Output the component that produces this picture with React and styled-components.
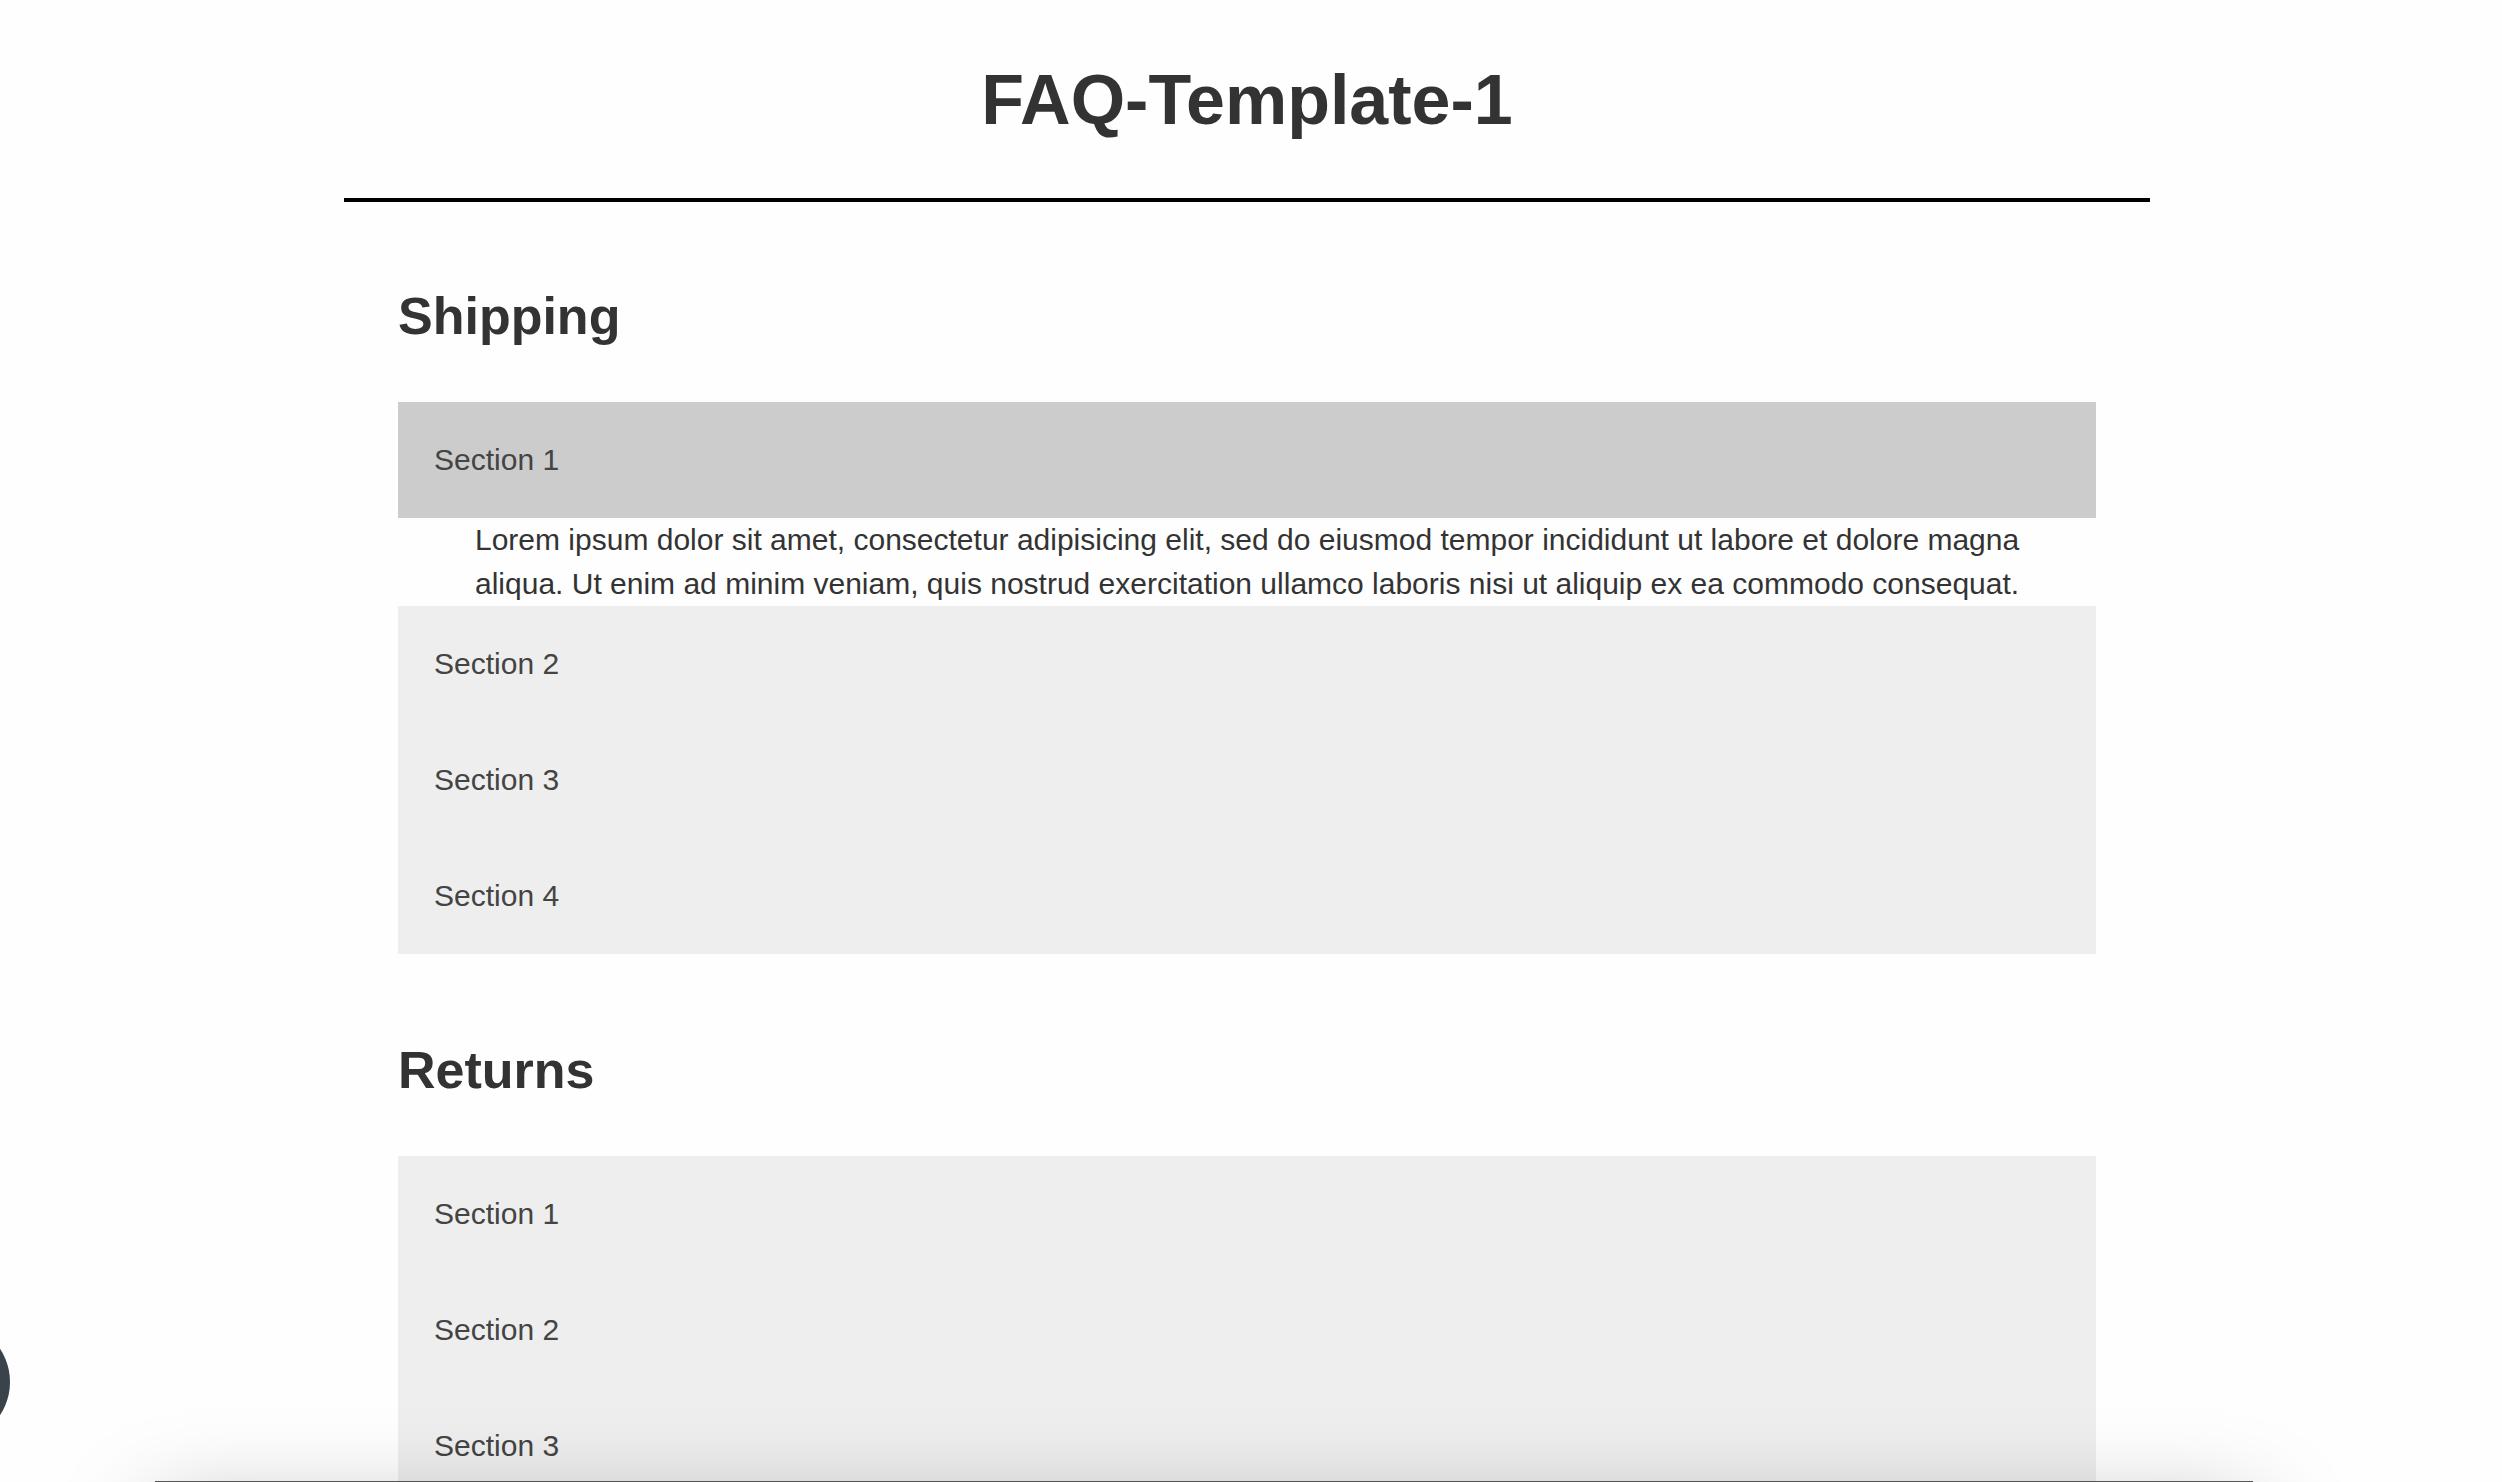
import React, { useState } from "react";
import styled, { createGlobalStyle } from "styled-components";

const GlobalStyle = createGlobalStyle`
  * { box-sizing: border-box; }
  body {
    margin: 0;
    background: #fefefe;
    color: #333;
    font-family: "Liberation Sans", Arial, Helvetica, sans-serif;
  }
`;

const Page = styled.div`
  height: 100vh;
  overflow: hidden;
  padding-right: 8px;
`;

const Main = styled.main`
  margin: 0 344px;
`;

const Header = styled.header`
  padding: 60px 0 58px;
  border-bottom: 4px solid #000;
  text-align: center;
`;

const Title = styled.h1`
  margin: 0;
  font-size: 70px;
  line-height: 80px;
`;

const Category = styled.section`
  padding: 82px 54px 2px;
`;

const CategoryTitle = styled.h2`
  margin: 0 0 54px;
  font-size: 52px;
  line-height: 64px;
`;

const Toggle = styled.button`
  display: block;
  width: 100%;
  padding: 36px;
  border: 0;
  background: ${({ $open }) => ($open ? "#ccc" : "#eee")};
  color: #444;
  font: inherit;
  font-size: 30px;
  line-height: 44px;
  text-align: left;
  cursor: pointer;

  &:hover {
    background: #ccc;
  }
`;

const Answer = styled.p`
  margin: 0;
  padding: 0 72px 0 77px;
  font-size: 30px;
  line-height: 44px;
`;

const ChatBubble = styled.button`
  position: fixed;
  left: -110px;
  bottom: 40px;
  width: 120px;
  height: 120px;
  padding: 0;
  border: 0;
  border-radius: 50%;
  background: #3a424c;
`;

const BottomSheet = styled.div`
  position: fixed;
  top: calc(100vh - 1px);
  left: 155px;
  right: 249px;
  height: 400px;
  background: #555;
  box-shadow: 0 36px 90px rgba(0, 0, 0, 0.34);
  pointer-events: none;
`;

const LOREM =
  "Lorem ipsum dolor sit amet, consectetur adipisicing elit, sed do eiusmod tempor incididunt ut labore et dolore magna aliqua. Ut enim ad minim veniam, quis nostrud exercitation ullamco laboris nisi ut aliquip ex ea commodo consequat.";

const CATEGORIES = [
  { title: "Shipping", items: ["Section 1", "Section 2", "Section 3", "Section 4"], initial: 0 },
  { title: "Returns", items: ["Section 1", "Section 2", "Section 3"], initial: -1 },
];

function Accordion({ title, items, initial }) {
  const [open, setOpen] = useState(initial);
  return (
    <Category>
      <CategoryTitle>{title}</CategoryTitle>
      {items.map((item, i) => (
        <React.Fragment key={item}>
          <Toggle
            type="button"
            $open={open === i}
            aria-expanded={open === i}
            onClick={() => setOpen(open === i ? -1 : i)}
          >
            {item}
          </Toggle>
          {open === i && <Answer>{LOREM}</Answer>}
        </React.Fragment>
      ))}
    </Category>
  );
}

export default function App() {
  return (
    <Page>
      <GlobalStyle />
      <Main>
        <Header>
          <Title>FAQ-Template-1</Title>
        </Header>
        {CATEGORIES.map((category) => (
          <Accordion key={category.title} {...category} />
        ))}
      </Main>
      <ChatBubble type="button" aria-label="Open chat" />
      <BottomSheet />
    </Page>
  );
}
